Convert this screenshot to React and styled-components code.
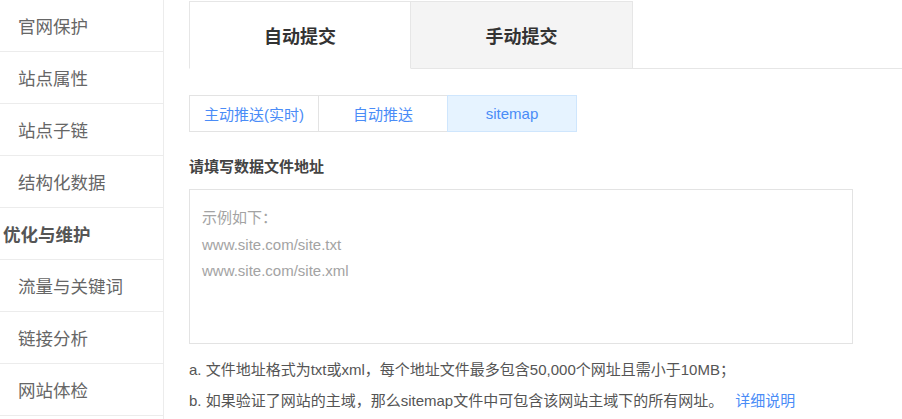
import React from 'react'
import styled, { createGlobalStyle } from 'styled-components'

const GlobalStyle = createGlobalStyle`
  body {
    margin: 0;
    background: #fff;
    font-family: "Liberation Sans", "Noto Sans CJK SC", sans-serif;
    color: #333;
  }
`

const Page = styled.div`
  display: flex;
  width: 902px;
  height: 419px;
  overflow: hidden;
`

const Sidebar = styled.nav`
  width: 163px;
  flex-shrink: 0;
  border-right: 1px solid #ececec;
`

const NavItem = styled.div`
  height: 51px;
  border-bottom: 1px solid #ececec;
  display: flex;
  align-items: center;
  padding-left: ${props => (props.group ? '3px' : '18px')};
  font-size: 17.5px;
  font-weight: ${props => (props.group ? 'bold' : 'normal')};
  color: ${props => (props.group ? '#555' : '#666')};
`

const Main = styled.main`
  flex: 1;
  padding-left: 25px;
`

const TabBar = styled.div`
  display: flex;
  margin-top: 1px;
  border-bottom: 1px solid #e6e6e6;
  height: 67px;
`

const Tab = styled.div`
  width: 222px;
  display: flex;
  align-items: center;
  justify-content: center;
  font-size: 18px;
  font-weight: bold;
  color: #333;
  box-sizing: border-box;
  border: 1px solid #e6e6e6;
  border-left: ${props => (props.active ? '1px solid #e6e6e6' : 'none')};
  background: ${props => (props.active ? '#fff' : '#f4f4f4')};
  margin-bottom: ${props => (props.active ? '-1px' : '0')};
  border-bottom: ${props => (props.active ? '1px solid #fff' : 'none')};
  height: ${props => (props.active ? '68px' : '67px')};
`

const SubTabs = styled.div`
  display: flex;
  margin-top: 26px;
`

const SubTab = styled.div`
  width: 130px;
  height: 37px;
  box-sizing: border-box;
  display: flex;
  align-items: center;
  justify-content: center;
  font-size: 15px;
  color: #4a8cf7;
  border: 1px solid ${props => (props.active ? '#cfe6fd' : '#e3e3e3')};
  background: ${props => (props.active ? '#e6f3ff' : '#fff')};
  & + & {
    margin-left: -1px;
  }
`

const Label = styled.div`
  margin-top: 24px;
  font-size: 15px;
  font-weight: bold;
  color: #444;
  line-height: 22px;
`

const AddressBox = styled.div`
  margin-top: 11px;
  width: 664px;
  height: 155px;
  box-sizing: border-box;
  border: 1px solid #e3e3e3;
  padding: 15px 12px;
`

const Placeholder = styled.div`
  font-size: 15px;
  line-height: 26.5px;
  color: #a3a3a3;
`

const Notes = styled.div`
  margin-top: 10px;
  font-size: 15px;
  line-height: 31px;
  color: #555;
`

const Link = styled.a`
  color: #4a8cf7;
  text-decoration: none;
  margin-left: 12px;
`

const navItems = [
  { label: '官网保护' },
  { label: '站点属性' },
  { label: '站点子链' },
  { label: '结构化数据' },
  { label: '优化与维护', group: true },
  { label: '流量与关键词' },
  { label: '链接分析' },
  { label: '网站体检' },
]

export default function App() {
  return (
    <Page>
      <GlobalStyle />
      <Sidebar>
        {navItems.map(item => (
          <NavItem key={item.label} group={item.group}>{item.label}</NavItem>
        ))}
      </Sidebar>
      <Main>
        <TabBar>
          <Tab active>自动提交</Tab>
          <Tab>手动提交</Tab>
        </TabBar>
        <SubTabs>
          <SubTab>主动推送(实时)</SubTab>
          <SubTab>自动推送</SubTab>
          <SubTab active>sitemap</SubTab>
        </SubTabs>
        <Label>请填写数据文件地址</Label>
        <AddressBox>
          <Placeholder>示例如下：</Placeholder>
          <Placeholder>www.site.com/site.txt</Placeholder>
          <Placeholder>www.site.com/site.xml</Placeholder>
        </AddressBox>
        <Notes>
          <div>a. 文件地址格式为txt或xml，每个地址文件最多包含50,000个网址且需小于10MB；</div>
          <div>
            b. 如果验证了网站的主域，那么sitemap文件中可包含该网站主域下的所有网址。
            <Link href="#">详细说明</Link>
          </div>
        </Notes>
      </Main>
    </Page>
  )
}
